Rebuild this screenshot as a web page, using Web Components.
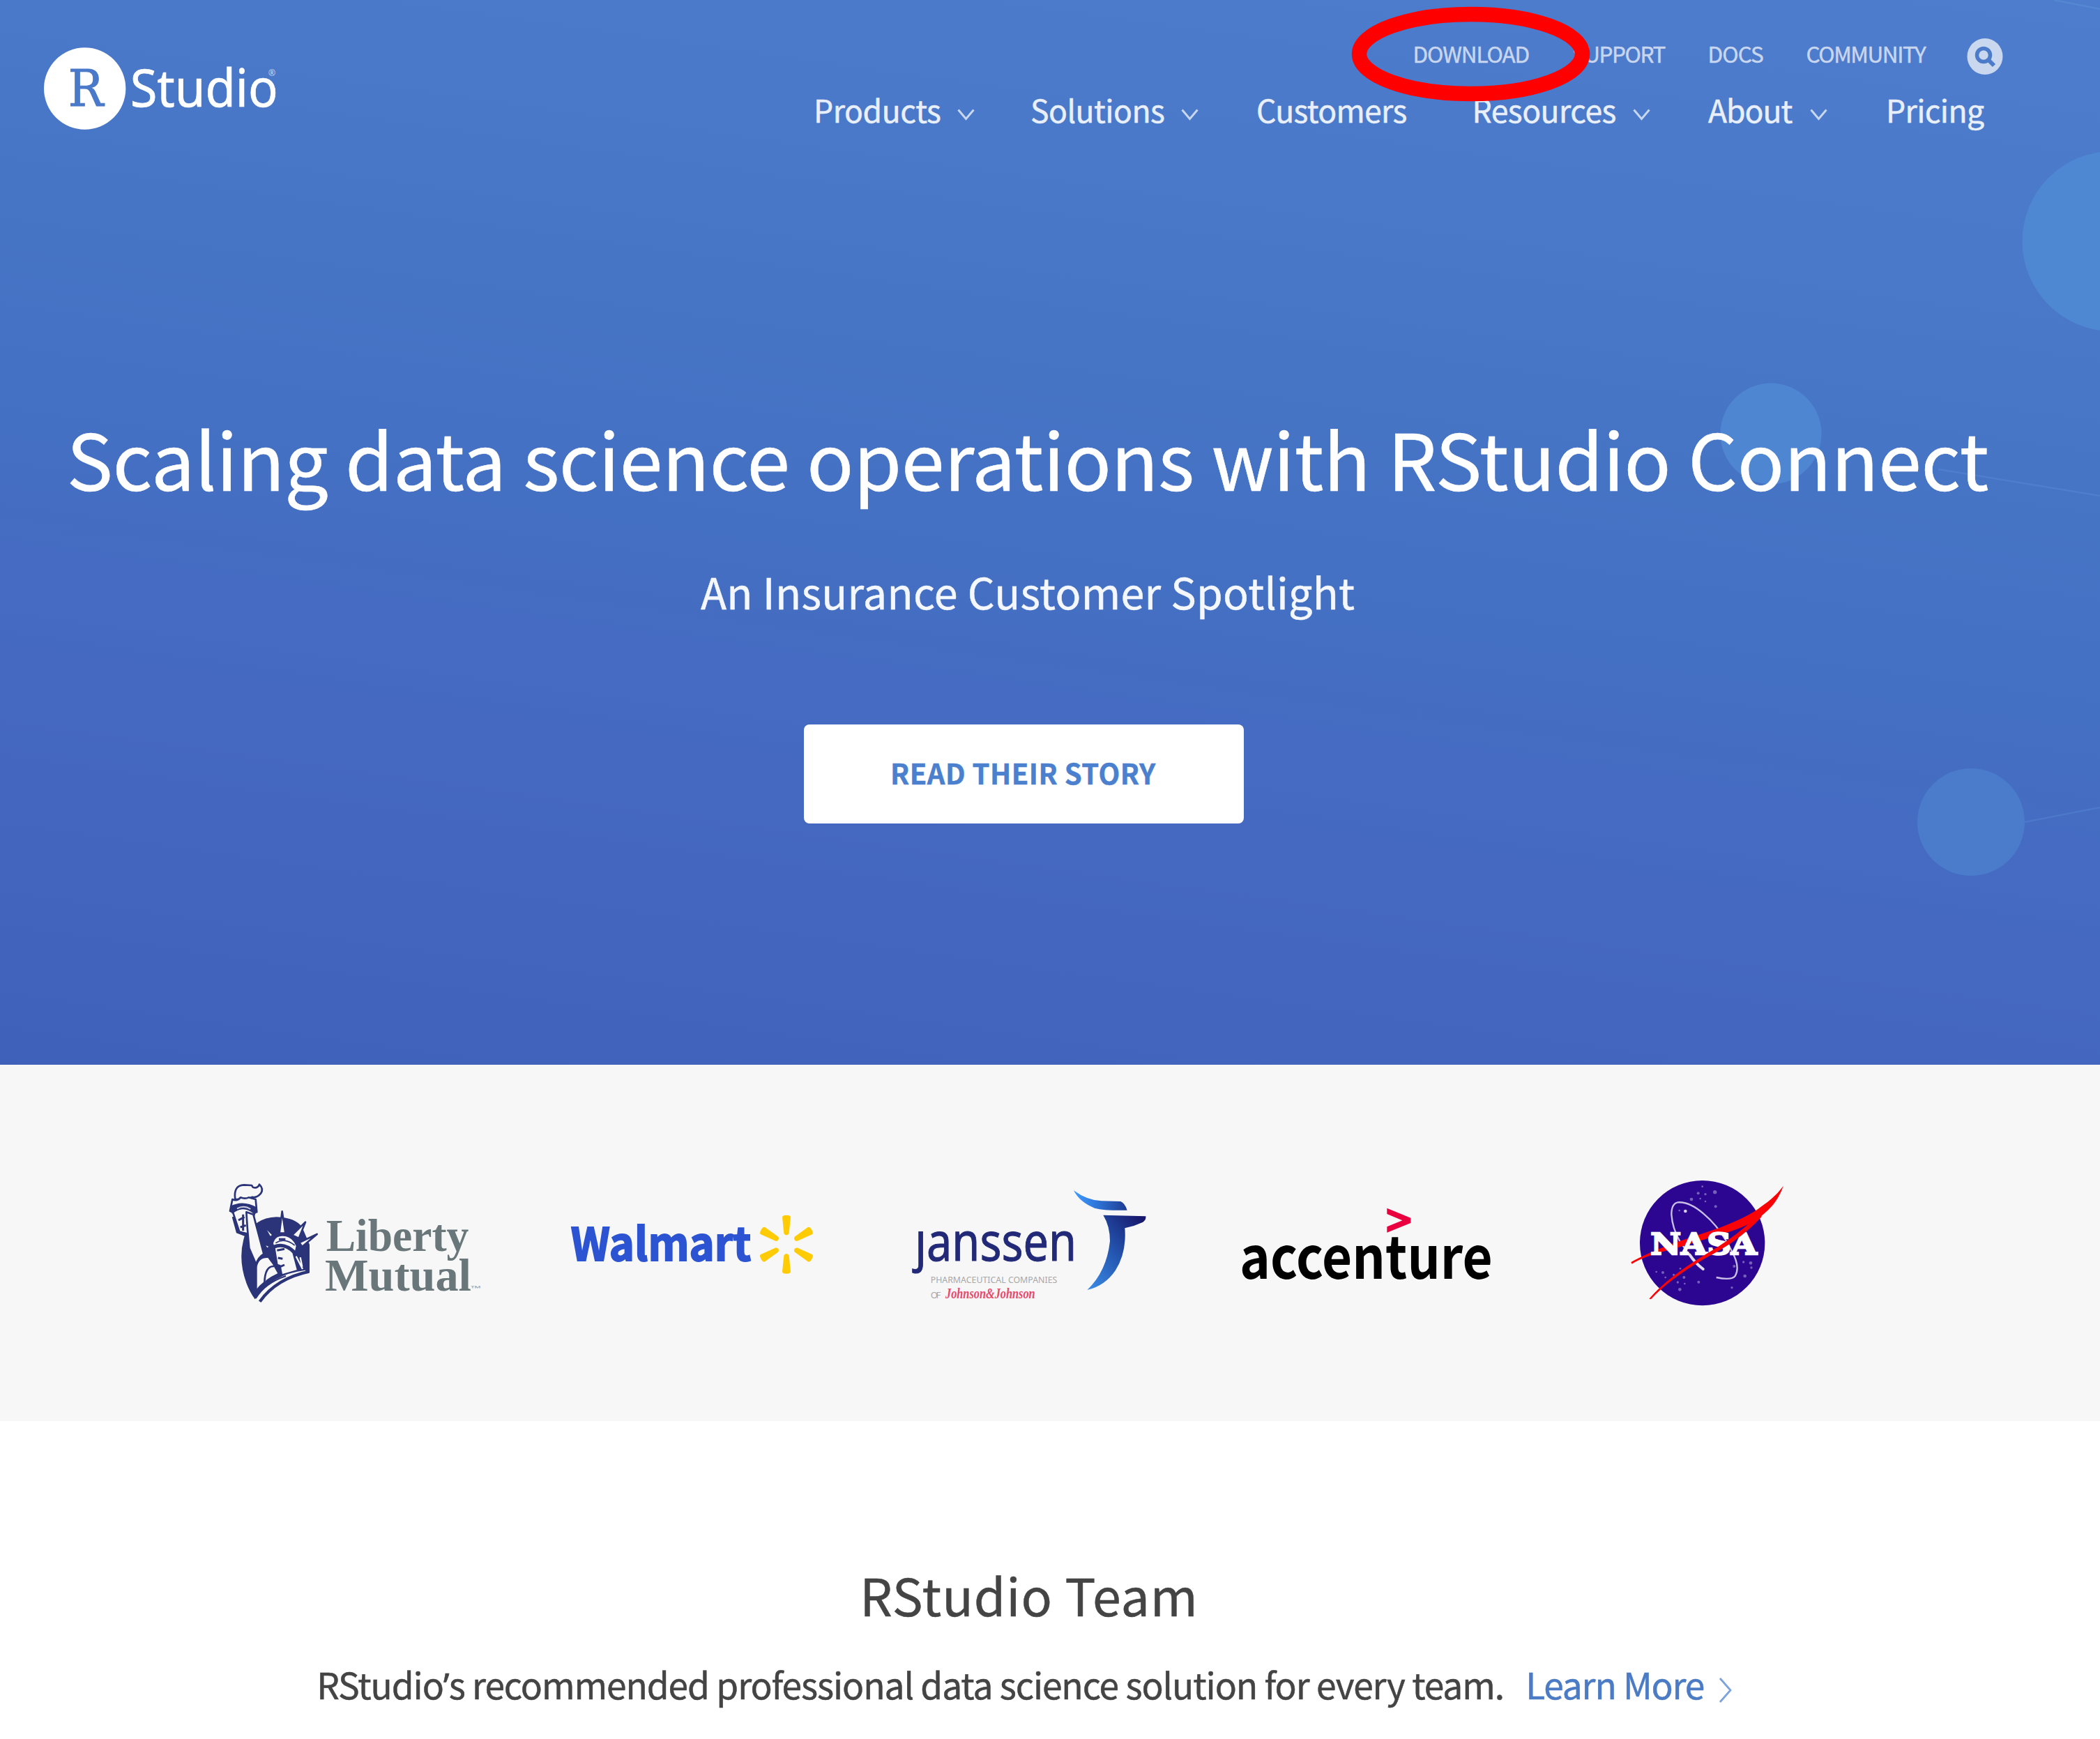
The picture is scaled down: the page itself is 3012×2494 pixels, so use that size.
<!DOCTYPE html>
<html lang="en">
<head>
<meta charset="utf-8">
<title>RStudio</title>
<style>
html,body{margin:0;background:#fff}
body{width:3012px;height:2494px;overflow:hidden;font-family:"Noto Sans CJK SC","Open Sans",sans-serif}
</style>
</head>
<body>
<rs-page></rs-page>
<script>
const define=(name,html)=>customElements.define(name,class extends HTMLElement{
  constructor(){super();this.attachShadow({mode:'open'}).innerHTML=html;}
});

/* One line of text whose inked width is set by the "w" attribute. */
customElements.define('fit-line',class extends HTMLElement{
  constructor(){
    super();
    this.attachShadow({mode:'open'}).innerHTML='<style>:host{display:block;white-space:nowrap;flex:none;-webkit-text-stroke:.5px currentColor}span{display:inline-block}</style><span><slot></slot></span>';
  }
  connectedCallback(){
    const w=+this.getAttribute('w'),s=this.getAttribute('size'),text=this.textContent;
    this.style.width=w+'px';this.style.fontSize=s+'px';this.style.lineHeight=this.getAttribute('lh')+'px';
    const c=getComputedStyle(this),x=document.createElement('canvas').getContext('2d');
    x.font=c.fontWeight+' '+s+'px '+c.fontFamily;
    const first=x.measureText(text[0]),last=x.measureText(text[text.length-1]);
    const span=this.shadowRoot.querySelector('span');
    const ink=span.getBoundingClientRect().width+first.actualBoundingBoxLeft-(last.width-last.actualBoundingBoxRight);
    span.style.marginLeft=first.actualBoundingBoxLeft+'px';
    span.style.letterSpacing=(w-ink)/(text.length-1)+'px';
  }
});

define('rs-logo',`<style>:host{display:block;width:500px;height:260px}svg{display:block}</style>
<svg width="500" height="260" viewBox="0 0 1500 780">
<circle cx="365" cy="381" r="176" fill="#fff"/>
<text x="293" y="455" font-family="DejaVu Serif" font-size="218" fill="#4979c8" stroke="#4979c8" stroke-width="3" textLength="152" lengthAdjust="spacingAndGlyphs">R</text>
<text x="560" y="460" font-family="Noto Sans" font-size="222" fill="#fff" stroke="#fff" stroke-width="2" textLength="636" lengthAdjust="spacingAndGlyphs">Studio</text>
<text x="1154" y="328" font-family="Noto Sans" font-size="38" fill="#c5d4ee">®</text>
</svg>`);

define('nav-item',`<style>:host{display:flex}svg{display:block;margin:29px 0 0 24px}:host([plain]) svg{display:none}</style>
<slot></slot><svg width="25" height="18" viewBox="0 0 25 18"><path d="M1.5 1.5 12.5 14.500 23.500 1.500" fill="none" stroke="#c8d7ef" stroke-width="3"/></svg>`);

define('search-icon',`<style>:host{display:block}svg{display:block}</style>
<svg width="52" height="54" viewBox="0 0 52 54"><ellipse cx="26" cy="27" rx="25.500" ry="26" fill="#cad8ef"/><circle cx="24" cy="25" r="9.500" fill="none" stroke="#4c7bca" stroke-width="5.500"/><path d="M31 32 39 40" stroke="#4c7bca" stroke-width="6"/></svg>`);

define('site-header',`<style>
:host{display:flex;justify-content:space-between;height:260px;color:#e9effa}
.menus{display:flex;flex-direction:column;align-items:flex-end}
.util{display:flex;padding:56px 139px 0 0;box-sizing:border-box;color:#c8d6ef;height:127px}
.main{display:flex;padding-right:166px}
</style>
<rs-logo></rs-logo>
<div class="menus">
<div class="util">
<fit-line w="163" size="31.5" lh="40">DOWNLOAD</fit-line>
<fit-line w="132.500" size="31.5" lh="40" style="margin-left:63.500px">SUPPORT</fit-line>
<fit-line w="76.500" size="31.5" lh="40" style="margin-left:64px">DOCS</fit-line>
<fit-line w="171.500" size="31.5" lh="40" style="margin-left:62.500px">COMMUNITY</fit-line>
<search-icon style="margin-left:58px;margin-top:-2px"></search-icon>
</div>
<div class="main">
<nav-item><fit-line w="178" size="44.500" lh="60">Products</fit-line></nav-item>
<nav-item style="margin-left:82px"><fit-line w="190" size="44.500" lh="60">Solutions</fit-line></nav-item>
<nav-item plain style="margin-left:85px"><fit-line w="213.500" size="44.500" lh="60">Customers</fit-line></nav-item>
<nav-item style="margin-left:98px"><fit-line w="202" size="44.500" lh="60">Resources</fit-line></nav-item>
<nav-item style="margin-left:83.500px"><fit-line w="121.500" size="44.500" lh="60">About</fit-line></nav-item>
<nav-item plain style="margin-left:88.500px"><fit-line w="137" size="44.500" lh="60">Pricing</fit-line></nav-item>
</div>
</div>`);

define('hero-art',`<style>:host{display:block;position:absolute;inset:0;z-index:0}svg{display:block}</style>
<svg width="3012" height="1527" viewBox="0 0 3012 1527">
<g fill="none" stroke="#5b8fd6" stroke-width="2.500"><path d="M2946 0 3012 13" opacity=".6"/><path d="M2780 673 3012 711" opacity=".35"/><path d="M2904 1179 3012 1158" opacity=".35"/></g>
<circle cx="3029.500" cy="346" r="129" fill="#4f88d2"/>
<circle cx="2540" cy="622" r="72.500" fill="#4f86d1"/>
<circle cx="2827" cy="1179" r="77" fill="#4a7ccb"/>
</svg>`);

define('cta-button',`<style>:host{display:flex;justify-content:center;width:631px;height:142.500px;box-sizing:border-box;background:#fff;border-radius:8px;color:#4a80cd;font-weight:700;padding-left:2px}</style><slot></slot>`);

define('hero-section',`<style>
:host{display:block;position:relative;height:1527px;overflow:hidden;background:linear-gradient(188deg,#4d7dcc 0%,#4978c8 25%,#4471c3 50%,#4568c1 72%,#4061ba 100%)}
site-header{position:relative}
.copy{position:relative;display:flex;flex-direction:column;align-items:center;width:2952px;padding-top:326px;color:#fff}
</style>
<hero-art></hero-art>
<site-header></site-header>
<div class="copy">
<fit-line w="2751" size="111.500" lh="140">Scaling data science operations with RStudio Connect</fit-line>
<fit-line w="938" size="61" lh="80" style="margin:82px 4px 0 0;color:#f4f7fd">An Insurance Customer Spotlight</fit-line>
<cta-button style="margin:150.500px 16px 0 0"><fit-line w="378" size="40" lh="138">READ THEIR STORY</fit-line></cta-button>
</div>`);

define('liberty-logo',`<style>:host{display:block}svg{display:block}</style>
<svg width="420" height="220" viewBox="0 0 1260 660">
<path d="M155 300 Q120 400 160 510 Q175 550 197 580 L235 540 Q310 470 432 465 L432 345 L400 270 Q370 228 290 226 Q240 228 208 250 Z" fill="#2b3479"/>
<g fill="#f7f7f7" stroke="#2b3479" stroke-width="8" stroke-linejoin="round">
<path d="M112 150 Q103 90 150 88 L183 90 L188 98 Q210 105 216 86 Q236 105 222 125 Q205 145 186 140 L160 150 Z"/>
<path d="M100 150 Q120 160 135 142 Q155 150 170 142 L200 150 L205 205 Q145 225 90 200 Z"/>
<path d="M102 205 Q150 170 195 210 L172 300 L130 290 Z"/>
<path d="M160 205 L190 215 L235 385 Q210 400 202 430 L172 360 L165 280 Z"/>
<path d="M202 545 L202 440 Q210 395 255 398 L275 425 L300 470 Q235 500 202 545 Z"/>
<path d="M238 510 Q240 435 280 438"/>
<path d="M314 202 L328 296 L302 296 Z"/>
<path d="M414 248 L386 318 L357 304 Z"/>
<path d="M464 300 L400 354 L388 336 Z"/>
<path d="M232 260 L276 304 L262 314 Z"/>
<path d="M232 340 L262 352 L250 364 Z"/>
<path d="M272 340 Q280 302 318 304 Q360 306 378 350 L372 378 Q325 330 276 352 Z"/>
<path d="M280 358 Q325 340 362 380 L382 456 L312 476 L304 436 L292 432 Z"/>
<path d="M374 395 L402 450 M392 400 L400 440" stroke="#f7f7f7" stroke-width="7"/>
</g>
<path d="M90 180 Q145 150 206 185 L200 212 Q150 170 98 212 Z" fill="#2b3479"/>
<path d="M120 190 Q150 174 178 192" stroke="#cfd1e2" stroke-width="6" fill="none"/>
<path d="M286 338 Q325 312 368 348" stroke="#2b3479" stroke-width="5" fill="none"/>
<path d="M300 322h28M292 370l32-6M296 402l20 4M306 440l18-8M126 240l26-14M134 270l24-8M146 215v70" stroke="#2b3479" stroke-width="9"/>
<path d="M104 225 L122 290 L158 304" fill="none" stroke="#2b3479" stroke-width="12"/>
<path d="M206 580 Q270 480 415 462" fill="none" stroke="#f7f7f7" stroke-width="14"/>
<path d="M218 590 Q290 490 430 461" fill="none" stroke="#2b3479" stroke-width="13"/>
<path d="M200 576 Q240 510 330 480" fill="none" stroke="#2b3479" stroke-width="7"/>
<g font-family="Liberation Serif" font-weight="700" font-size="198" fill="#69777a">
<text x="503" y="373" textLength="614" lengthAdjust="spacingAndGlyphs">Liberty</text>
<text x="498" y="542" textLength="630" lengthAdjust="spacingAndGlyphs">Mutual</text></g>
<text x="1126" y="542" font-family="Noto Sans" font-size="28" fill="#9aa3a5" textLength="44" lengthAdjust="spacingAndGlyphs">™</text>
</svg>`);

define('walmart-logo',`<style>:host{display:block}svg{display:block}</style>
<svg width="400" height="160" viewBox="0 0 1200 480">
<text x="56" y="325" font-family="Noto Sans CJK SC" font-weight="700" font-size="196" fill="#2c54d2" stroke="#2c54d2" stroke-width="6" textLength="776" lengthAdjust="spacingAndGlyphs">Walmart</text>
<g fill="#ffcb05" transform="translate(984 254)">
<g id="r"><path d="M-18 -117 Q-18 -126 0 -126 Q18 -126 18 -117 L11 -48 Q8 -40 0 -40 Q-8 -40 -11 -48 Z"/><path d="M-18 117 Q-18 126 0 126 Q18 126 18 117 L11 48 Q8 40 0 40 Q-8 40 -11 48 Z"/></g>
<use href="#r" transform="rotate(60)"/><use href="#r" transform="rotate(120)"/></g>
</svg>`);

define('janssen-logo',`<style>:host{display:block}svg{display:block}</style>
<svg width="400" height="220" viewBox="0 0 1200 660">
<defs><linearGradient id="a"><stop stop-color="#409cff"/><stop offset=".4" stop-color="#2f78dc"/><stop offset="1" stop-color="#1d3c92"/></linearGradient>
<linearGradient id="b" x1="0" y1="1" x2=".9" y2="0"><stop stop-color="#3c8ee8"/><stop offset=".5" stop-color="#2456b0"/><stop offset="1" stop-color="#17176b"/></linearGradient></defs>
<text x="97" y="384" font-family="Noto Sans" font-size="230" fill="#222a78" stroke="#222a78" stroke-width="3" textLength="695" lengthAdjust="spacingAndGlyphs">janssen</text>
<path d="M90 195h60v52H90z" fill="#f7f7f7"/>
<path d="M780 82 Q840 126 900 127 L982 129 Q1000 136 1010 167 Q920 170 870 158 Q805 132 780 82 Z" fill="url(#a)"/>
<path d="M907 188 L1090 193 Q1092 208 1078 218 Q1040 236 1000 244 Q1008 350 960 425 Q915 492 838 510 Q922 430 936 300 Q936 235 907 188 Z" fill="url(#b)"/>
<g font-family="Noto Sans" fill="#a8a8a8" font-size="39"><text x="164" y="481" textLength="545" lengthAdjust="spacingAndGlyphs">PHARMACEUTICAL COMPANIES</text><text x="164" y="547" textLength="44">OF</text></g>
<text x="228" y="547" font-family="Liberation Serif" font-style="italic" font-weight="700" font-size="60" fill="#e9476c" textLength="386" lengthAdjust="spacingAndGlyphs">Johnson&amp;Johnson</text>
</svg>`);

define('accenture-logo',`<style>:host{display:block}svg{display:block}</style>
<svg width="420" height="160" viewBox="0 0 1260 480">
<text x="84" y="402" font-family="Noto Sans CJK SC" font-weight="700" font-size="253" fill="#000" textLength="1088" lengthAdjust="spacingAndGlyphs">accenture</text>
<path d="M718 98 L820 140 V162 L718 203 V178 L784 151 L718 123 Z" fill="#eb003f"/>
</svg>`);

define('nasa-logo',`<style>:host{display:block}svg{display:block}</style>
<svg width="280" height="220" viewBox="0 0 840 660">
<circle cx="395" cy="338" r="269" fill="#2c0691"/>
<g fill="#7561b8"><circle cx="449" cy="119" r="8"/><circle cx="377" cy="124" r="6"/><circle cx="408" cy="128" r="5"/><circle cx="348" cy="150" r="7"/><circle cx="386" cy="147" r="4"/><circle cx="408" cy="159" r="4"/><circle cx="452" cy="181" r="6"/><circle cx="322" cy="201" r="7" fill="#d5cfea"/><circle cx="296" cy="198" r="4"/><circle cx="197" cy="462" r="4"/><circle cx="225" cy="465" r="6"/><circle cx="236" cy="486" r="4"/><circle cx="272" cy="475" r="5"/><circle cx="316" cy="486" r="6"/><circle cx="289" cy="507" r="5"/><circle cx="319" cy="513" r="4"/><circle cx="298" cy="538" r="7"/><circle cx="379" cy="506" r="6"/><circle cx="522" cy="530" r="5"/><circle cx="572" cy="420" r="5"/><circle cx="603" cy="424" r="7"/><circle cx="606" cy="444" r="5"/><circle cx="578" cy="480" r="7"/><circle cx="532" cy="438" r="6"/><circle cx="300" cy="448" r="4"/><circle cx="395" cy="95" r="4"/></g>
<path d="M455 486 Q520 500 536 480 Q560 440 520 370 Q470 270 400 212 Q340 160 290 163 Q262 168 262 215 Q266 275 298 330 Q345 405 402 452" fill="none" stroke="#c8bfe6" stroke-width="7"/>
<path d="M340 388 Q365 425 398 450" stroke="#e0dbf2" stroke-width="12" stroke-linecap="round" fill="none"/>
<path d="M88 420 Q150 385 265 341 L470 272 Q600 222 650 180 Q705 145 744 92 Q715 170 660 212 Q610 260 490 296 L270 364 Q150 392 92 428 Z" fill="#fb0207"/>
<text x="172" y="386" font-family="DejaVu Serif" font-weight="700" font-size="130" fill="#fff" stroke="#fff" stroke-width="7" textLength="458" lengthAdjust="spacingAndGlyphs">NASA</text>
<path d="M166 578 Q240 490 400 392 Q560 300 645 205 L650 225 Q560 325 410 402 Q250 495 174 580 Z" fill="#fb0207"/>
</svg>`);

define('customer-logos',`<style>
:host{display:flex;align-items:flex-start;height:511px;box-sizing:border-box;padding:143px 0 0 300px;background:#f7f7f7}
</style>
<liberty-logo></liberty-logo>
<walmart-logo style="margin:30px 0 0 80px"></walmart-logo>
<janssen-logo style="margin:10px 0 0 80px"></janssen-logo>
<accenture-logo style="margin:30px 0 0 70px"></accenture-logo>
<nasa-logo style="margin-left:140px"></nasa-logo>`);

define('team-section',`<style>
:host{display:flex;flex-direction:column;align-items:center;width:2952px;padding-top:203px;color:#444}
.row{display:flex;margin:49px 8px 0 0}
.apos{font-family:"Noto Sans",sans-serif;line-height:0}
.more{color:#4b7bc4;margin-left:38.500px}
svg{display:block;margin:25px 0 0 21px}
</style>
<fit-line w="471.500" size="73.500" lh="90">RStudio Team</fit-line>
<div class="row">
<fit-line w="1695.500" size="51.500" lh="70">RStudio<span class="apos">’</span>s recommended professional data science solution for every team.</fit-line>
<fit-line class="more" w="250.500" size="51.500" lh="70">Learn More</fit-line>
<svg width="20" height="38" viewBox="0 0 20 38"><path d="M2 2 17 19 2 36" fill="none" stroke="#7ea2da" stroke-width="2.800"/></svg>
</div>`);

/* Ring that marks the download link. */
define('mark-ring',`<style>:host{position:absolute;left:1938px;top:9px;display:block;pointer-events:none}svg{display:block}</style>
<svg width="343" height="137"><ellipse cx="171.500" cy="68.500" rx="160" ry="57" fill="none" stroke="#f00" stroke-width="21.500"/></svg>`);

define('rs-page',`<style>:host{display:block;position:relative;width:3012px;height:2494px;overflow:hidden;background:#fff}</style>
<hero-section></hero-section>
<customer-logos></customer-logos>
<team-section></team-section>
<mark-ring></mark-ring>`);
</script>
</body>
</html>
